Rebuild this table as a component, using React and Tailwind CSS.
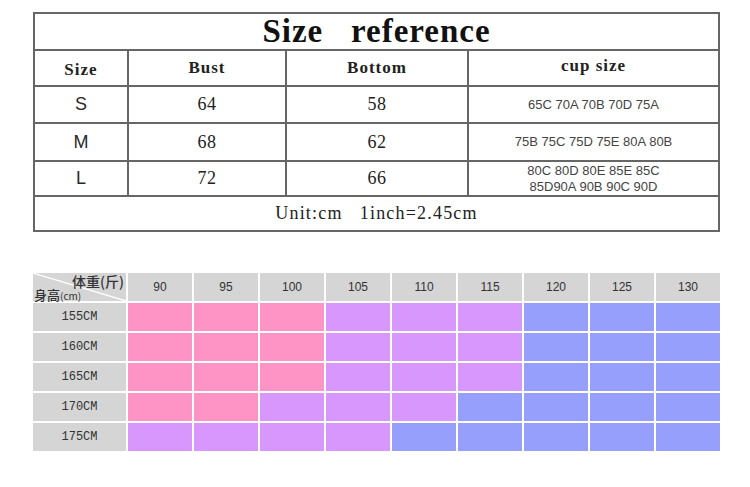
import React from "react";

const SERIF = "font-['Liberation_Serif','Times_New_Roman',serif]";
const SANS = "font-['Liberation_Sans',Arial,sans-serif]";
const MONO = "font-['Liberation_Mono','Courier_New',monospace]";
const CJK = "font-['Noto_Sans_CJK_SC','Liberation_Sans',sans-serif]";

const sizes = [
  { s: "S", bust: "64", bottom: "58", cup: ["65C 70A 70B 70D 75A"] },
  { s: "M", bust: "68", bottom: "62", cup: ["75B 75C 75D 75E 80A 80B"] },
  { s: "L", bust: "72", bottom: "66", cup: ["80C 80D 80E 85E 85C", "85D90A 90B 90C 90D"] },
];

const weights = ["90", "95", "100", "105", "110", "115", "120", "125", "130"];
const P = "bg-[#fe93c6]";
const U = "bg-[#d797fc]";
const B = "bg-[#979ffc]";
const heights = [
  { h: "155CM", c: [P, P, P, U, U, U, B, B, B] },
  { h: "160CM", c: [P, P, P, U, U, U, B, B, B] },
  { h: "165CM", c: [P, P, P, U, U, U, B, B, B] },
  { h: "170CM", c: [P, P, U, U, U, B, B, B, B] },
  { h: "175CM", c: [U, U, U, U, B, B, B, B, B] },
];

const headCell = `bg-white flex items-center justify-center text-[17px] font-bold tracking-[1px] text-[#222] ${SERIF}`;
const numCell = `bg-white flex items-center justify-center text-[18px] tracking-[0.5px] text-[#222] ${SERIF}`;

export default function App() {
  return (
    <div className="w-[750px] h-[487px] bg-white pt-[12px] pl-[33px] overflow-hidden">
      {/* Size reference table */}
      <div className="w-[687px] grid grid-cols-[92px_156px_180px_249px] grid-rows-[35px_34px_35px_36px_33px_33px] gap-[2px] bg-[#666] border-2 border-[#666]">
        <div className="col-span-4 bg-white flex items-center justify-center">
          <span className={`text-[33px] font-bold tracking-[1px] text-[#111] whitespace-pre leading-none ${SERIF}`}>
            {"Size   reference"}
          </span>
        </div>
        <div className={`${headCell} pt-[4px]`}>Size</div>
        <div className={headCell}>Bust</div>
        <div className={headCell}>Bottom</div>
        <div className={`${headCell} pb-[4px]`}>cup size</div>
        {sizes.map((r) => (
          <React.Fragment key={r.s}>
            <div className={`bg-white flex items-center justify-center text-[18px] text-[#2a2a2a] ${SANS}`}>{r.s}</div>
            <div className={numCell}>{r.bust}</div>
            <div className={numCell}>{r.bottom}</div>
            <div className={`bg-white flex flex-col items-center justify-center text-[13px] leading-[16px] text-[#444] ${SANS}`}>
              {r.cup.map((c) => (
                <span key={c}>{c}</span>
              ))}
            </div>
          </React.Fragment>
        ))}
        <div className="col-span-4 bg-white flex items-center justify-center">
          <span className={`text-[18px] tracking-[1.2px] text-[#222] whitespace-pre ${SERIF}`}>{"Unit:cm   1inch=2.45cm"}</span>
        </div>
      </div>

      {/* Height / weight chart */}
      <div className="mt-[41px] w-[687px] grid grid-cols-[93px_repeat(9,64px)] grid-rows-[28px_repeat(5,28px)] gap-[2px] bg-white">
        <div className="relative bg-[#d5d5d5]">
          <svg className="absolute inset-0" width="93" height="28" viewBox="0 0 93 28">
            <line x1="0" y1="0" x2="93" y2="28" stroke="#ffffff" strokeWidth="1.2" />
          </svg>
          <div className="relative flex flex-col justify-between h-full py-[1px]">
            <div className={`flex justify-end pr-[2px] text-[14px] font-medium leading-none text-[#333] ${CJK}`}>体重(斤)</div>
            <div className={`flex items-end pl-[1px] text-[13px] font-medium leading-none text-[#333] ${CJK}`}>
              <span>身高</span>
              <span className="text-[10px] font-normal">(cm)</span>
            </div>
          </div>
        </div>
        {weights.map((w) => (
          <div key={w} className={`bg-[#d5d5d5] flex items-center justify-center text-[12px] text-[#333] ${SANS}`}>
            {w}
          </div>
        ))}
        {heights.map((r) => (
          <React.Fragment key={r.h}>
            <div className={`bg-[#d5d5d5] flex items-center justify-center text-[12px] text-[#333] ${MONO}`}>{r.h}</div>
            {r.c.map((c, i) => (
              <div key={i} className={c} />
            ))}
          </React.Fragment>
        ))}
      </div>
    </div>
  );
}
